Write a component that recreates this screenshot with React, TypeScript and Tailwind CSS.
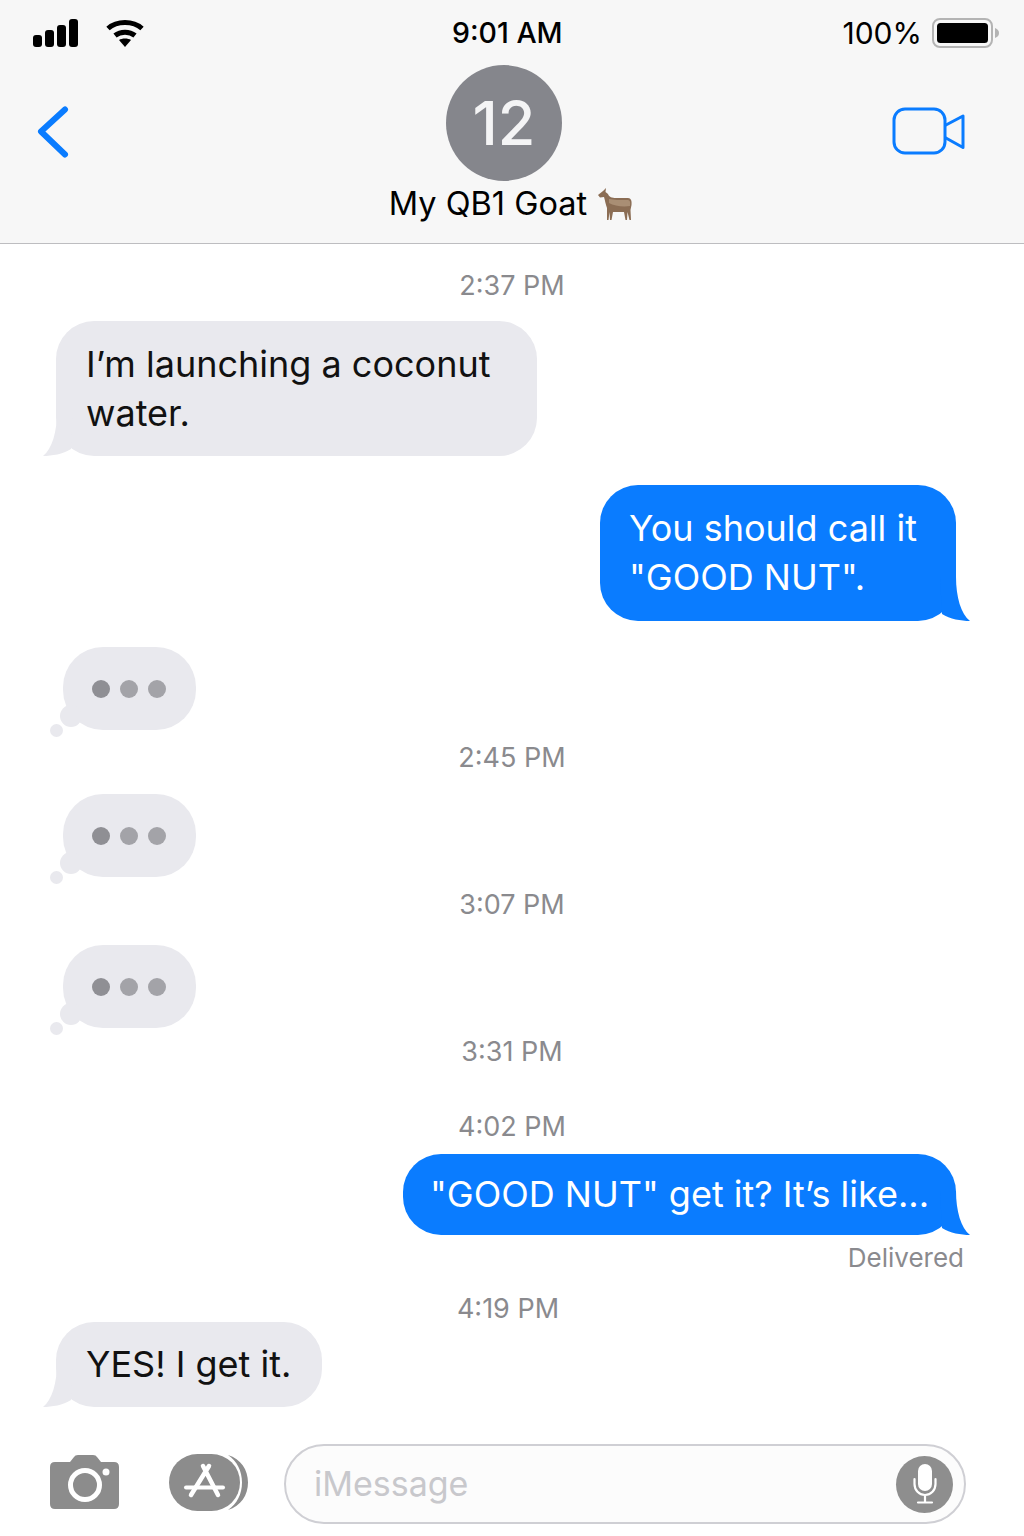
const BLUE = "#0a7cff";

function Tail({ side, color }: { side: "left" | "right"; color: string }) {
  return (
    <svg
      viewBox="0 0 30 44"
      className={side === "left" ? "absolute bottom-0 left-[-13px] h-[44px] w-[30px]" : "absolute bottom-0 right-[-14px] h-[44px] w-[30px] -scale-x-100"}
    >
      <path d="M14 0 C14 20 9 37 0 44 C9 44 20 42 28 37 L30 0 Z" fill={color} />
    </svg>
  );
}

function Stamp({ children, className }: { children: string; className: string }) {
  return <div className={"text-center text-[27px] leading-[32px] text-[#8a8a8e] " + className}>{children}</div>;
}

function Typing({ className }: { className: string }) {
  return (
    <div className={"relative ml-[63px] flex h-[83px] w-[133px] items-center justify-center gap-[10px] rounded-[40px] bg-[#e9e9ee] " + className}>
      <span className="absolute left-[-3px] top-[58px] h-[22px] w-[22px] rounded-full bg-[#e9e9ee]" />
      <span className="absolute left-[-13px] top-[77px] h-[13px] w-[13px] rounded-full bg-[#e9e9ee]" />
      <span className="ml-[-2px] h-[18px] w-[18px] rounded-full bg-[#8f8f94]" />
      <span className="h-[18px] w-[18px] rounded-full bg-[#a3a3a8]" />
      <span className="h-[18px] w-[18px] rounded-full bg-[#a3a3a8]" />
    </div>
  );
}

function Goat() {
  return (
    <svg viewBox="0 0 34 33" className="ml-[11px] mt-[1px] h-[33px] w-[34px]">
      <path d="M0 7 L5 3 L8 0 L7.500 4 L10 6 C11 9 14 10 18 10 L30 10 C33 10 34 13 33.500 17 L32.500 22 L33 32 L31.500 32 L29.500 24 L29 32 L27.500 32 L26 24 L15 24 L13.500 32 L12 32 L11.500 24 L10.500 32 L9 32 L9 20 C7.500 16 7 12 6 9 L2 9.500 Z" fill="#8b6d54" />
      <path d="M11 11 C14 11 16 12 19 12 L30 12 C32 12 32.500 14 32 18 C25 19 16 18 11 15 Z" fill="#a98e74" />
    </svg>
  );
}

export default function App() {
  return (
    <div className="flex h-[1536px] w-[1024px] flex-col overflow-hidden bg-white font-['Inter',sans-serif] text-black">
      <header className="h-[244px] shrink-0 border-b border-[#bdbdc0] bg-[#f7f7f7]">
        <div className="relative flex h-[65px] items-center justify-between pl-[33px] pr-[25px]">
          <div className="flex items-center gap-[27px]">
            <svg viewBox="0 0 46 28" className="h-[28px] w-[46px]">
              <rect x="0" y="16" width="9" height="12" rx="3" />
              <rect x="12" y="11" width="9" height="17" rx="3" />
              <rect x="24" y="6" width="9" height="22" rx="3" />
              <rect x="36" y="0" width="9" height="28" rx="3" />
            </svg>
            <svg viewBox="0 0 38 28" className="h-[28px] w-[38px]">
              <path d="M2 9.500 C11 1.500 27 1.500 36 9.500" fill="none" stroke="#000" strokeWidth="5" />
              <path d="M9 16.500 C14.500 12 23.500 12 29 16.500" fill="none" stroke="#000" strokeWidth="5" />
              <path d="M13 21 C16 19 22 19 25 21 L19 28 Z" />
            </svg>
          </div>
          <div className="absolute left-[452px] top-[15px] text-[28.500px] font-medium leading-[36px]">9:01 AM</div>
          <div className="flex items-center gap-[10px]">
            <span className="text-[30px] leading-[36px]">100%</span>
            <svg viewBox="0 0 67 30" className="h-[30px] w-[67px]">
              <rect x="1" y="1" width="59" height="28" rx="7" fill="none" stroke="#b4b4b4" strokeWidth="2" />
              <rect x="5" y="5" width="51" height="20" rx="3.500" />
              <path d="M63 10 C66 11 67 13 67 15 C67 17 66 19 63 20 Z" fill="#b4b4b4" />
            </svg>
          </div>
        </div>
        <div className="flex h-[116px] items-center">
          <svg viewBox="0 0 34 54" className="ml-[36px] mt-[15px] h-[54px] w-[34px]">
            <path d="M29 5.500 L5 27.500 L29 50.500" fill="none" stroke={BLUE} strokeWidth="6" strokeLinecap="round" strokeLinejoin="round" />
          </svg>
          <div className="ml-[376px] flex h-[116px] w-[116px] items-center justify-center rounded-full bg-[#85868c] text-[61px] font-medium leading-none text-[#f4f4f5]">12</div>
          <svg viewBox="0 0 74 50" className="ml-[330px] mt-[17px] h-[50px] w-[74px]">
            <rect x="2" y="2" width="51" height="44" rx="11" fill="none" stroke={BLUE} strokeWidth="3" />
            <path d="M53 18.500 L71 9 L71 40.500 L53 30.500" fill="none" stroke={BLUE} strokeWidth="3" strokeLinejoin="round" />
          </svg>
        </div>
        <div className="mt-[3px] flex h-[40px] items-center justify-center pr-[3px] text-[32.500px] leading-[40px]">
          <span>My QB1 Goat</span>
          <Goat />
        </div>
      </header>

      <main className="flex-1">
        <Stamp className="mt-[26px]">2:37 PM</Stamp>
        <div className="relative ml-[56px] mt-[19px] h-[135px] w-[481px] rounded-[38px] bg-[#e9e9ee] pl-[30px] pt-[19px] text-[36px] leading-[49px] text-[#111]">
          <Tail side="left" color="#e9e9ee" />
          <div className="relative">I’m launching a coconut<br />water.</div>
        </div>
        <div className="relative ml-[600px] mt-[29px] h-[136px] w-[356px] rounded-[38px] bg-[#0a7cff] pl-[29px] pt-[19px] text-[36px] leading-[49px] text-white">
          <Tail side="right" color={BLUE} />
          <div className="relative whitespace-nowrap">You should call it<br />"GOOD NUT".</div>
        </div>
        <Typing className="mt-[26px]" />
        <Stamp className="mt-[12px]">2:45 PM</Stamp>
        <Typing className="mt-[20px]" />
        <Stamp className="mt-[12px]">3:07 PM</Stamp>
        <Typing className="mt-[24px]" />
        <Stamp className="mt-[8px]">3:31 PM</Stamp>
        <Stamp className="mt-[43px]">4:02 PM</Stamp>
        <div className="relative ml-[403px] mt-[11px] h-[81px] w-[553px] rounded-[38px] bg-[#0a7cff] pl-[27px] pt-[16px] text-[36px] leading-[48px] text-white">
          <Tail side="right" color={BLUE} />
          <div className="relative whitespace-nowrap">"GOOD NUT" get it? It’s like...</div>
        </div>
        <div className="mr-[60px] mt-[7px] text-right text-[26px] leading-[32px] text-[#8a8a8e]">Delivered</div>
        <div className="mt-[19px] pr-[8px] text-center text-[27px] leading-[32px] text-[#8a8a8e]">4:19 PM</div>
        <div className="relative ml-[56px] mt-[-3px] h-[85px] w-[266px] rounded-[38px] bg-[#e9e9ee] pl-[30px] pt-[18px] text-[36px] leading-[48px] text-[#111]">
          <Tail side="left" color="#e9e9ee" />
          <div className="relative whitespace-nowrap">YES! I get it.</div>
        </div>
      </main>

      <footer className="flex h-[92px] shrink-0 items-start pl-[50px]">
        <svg viewBox="0 0 69 54" className="mt-[11px] h-[54px] w-[69px]">
          <path d="M5 7 H20 L24 2 Q25 0 28 0 H43 Q46 0 47 2 L51 7 H64 Q69 7 69 12 V49 Q69 54 64 54 H5 Q0 54 0 49 V12 Q0 7 5 7 Z" fill="#8c8c8c" />
          <circle cx="35" cy="30" r="14.500" fill="none" stroke="#fff" strokeWidth="5" />
          <circle cx="56" cy="17" r="3.500" fill="#fff" />
        </svg>
        <svg viewBox="0 0 80 58" className="ml-[50px] mt-[10px] h-[58px] w-[80px]">
          <rect x="0" y="0" width="71" height="57" rx="28.500" fill="#8c8c8c" />
          <path d="M59 1 C72 5 79 16 79 28.500 C79 41 72 52 59 56 C68 50 73 40 73 28.500 C73 17 68 7 59 1 Z" fill="#8c8c8c" />
          <path d="M34 12 L49 41 M40 12 L22 41" fill="none" stroke="#fff" strokeWidth="4.500" strokeLinecap="round" />
          <path d="M17 33.500 H54" fill="none" stroke="#fff" strokeWidth="4" strokeLinecap="round" />
        </svg>
        <div className="ml-[35px] flex h-[80px] w-[682px] items-center justify-between rounded-[40px] border-2 border-[#cfcfd4] bg-[#fcfcfc] pl-[28px] pr-[11px]">
          <span className="text-[34px] leading-[40px] text-[#c8c8cc]">iMessage</span>
          <span className="flex h-[57px] w-[57px] items-center justify-center rounded-full bg-[#8e8e8e]">
            <svg viewBox="0 0 24 40" className="h-[40px] w-[24px]">
              <rect x="5" y="0" width="14" height="27" rx="7" fill="#fff" />
              <path d="M1.500 15 V20 C1.500 26 6 31 12 31 C18 31 22.500 26 22.500 20 V15 M12 31 V38 M5 38.500 H19" fill="none" stroke="#fff" strokeWidth="2.200" strokeLinecap="round" />
            </svg>
          </span>
        </div>
      </footer>
    </div>
  );
}
